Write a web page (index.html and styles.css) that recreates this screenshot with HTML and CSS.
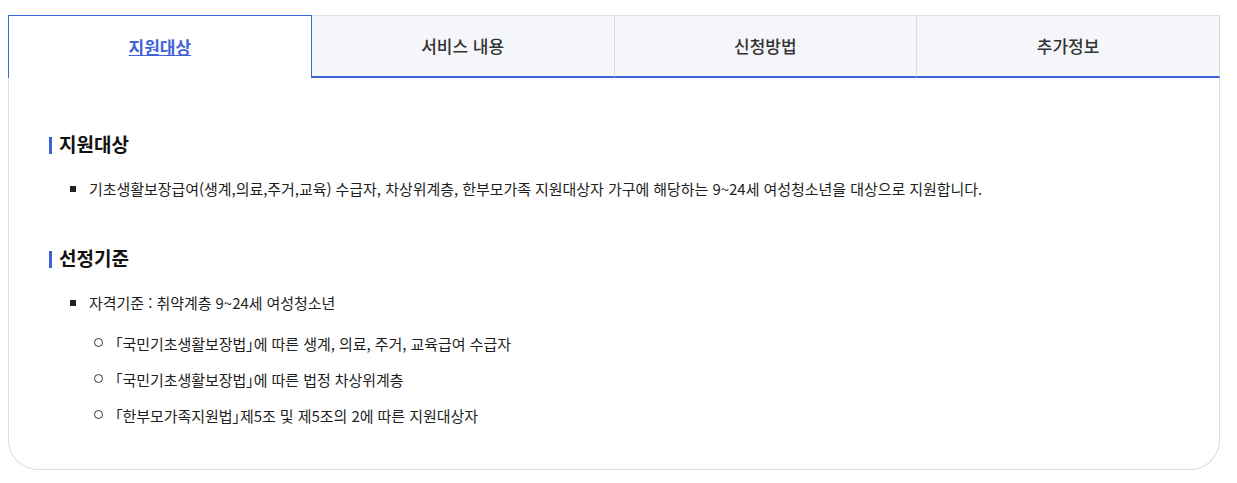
FILE: index.html
```html
<!DOCTYPE html>
<html lang="ko">

<head>
    <meta charset="UTF-8">
    <title>지원대상</title>
    <link rel="stylesheet" href="styles.css">
</head>

<body>

    <div class="tab-box">
        <ul class="tabs">
            <li class="on"><a href="javascript:void(0)">지원대상</a></li>
            <li><a href="javascript:void(0)">서비스 내용</a></li>
            <li><a href="javascript:void(0)">신청방법</a></li>
            <li><a href="javascript:void(0)">추가정보</a></li>
        </ul>

        <div class="tab-cont">
            <h4 class="tit">지원대상</h4>
            <ul class="dot-list">
                <li>기초생활보장급여(생계,의료,주거,교육) 수급자, 차상위계층, 한부모가족 지원대상자 가구에 해당하는 9~24세 여성청소년을 대상으로 지원합니다.</li>
            </ul>

            <h4 class="tit">선정기준</h4>
            <ul class="dot-list">
                <li>자격기준 : 취약계층 9~24세 여성청소년
                    <ul class="circle-list">
                        <li>「국민기초생활보장법」에 따른 생계, 의료, 주거, 교육급여 수급자</li>
                        <li>「국민기초생활보장법」에 따른 법정 차상위계층</li>
                        <li>「한부모가족지원법」제5조 및 제5조의 2에 따른 지원대상자</li>
                    </ul>
                </li>
            </ul>
        </div>
    </div>

</body>

</html>
```

FILE: styles.css
```css
* {
    margin: 0;
    padding: 0;
    box-sizing: border-box;
}

body {
    background: #fff;
    font-family: "Noto Sans CJK KR", "Noto Sans", sans-serif;
    color: #333;
}

ul {
    list-style: none;
}

.tab-box {
    width: 1212px;
    margin: 15px 0 0 8px;
}

/* 탭 메뉴 */
.tabs {
    display: flex;
    height: 63px;
}

.tabs>li {
    flex: 1;
    display: flex;
    align-items: center;
    justify-content: center;
    padding-bottom: 2px;
    background: #f5f6fa;
    border-top: 1px solid #dcdde1;
    border-right: 1px solid #dcdde1;
    border-bottom: 2px solid #3f62d8;
}

.tabs>li a {
    color: #333;
    font-size: 17px;
    font-weight: 500;
    text-decoration: none;
}

.tabs>li.on {
    background: #fff;
    border: 1px solid #3f62d8;
    border-bottom: none;
}

.tabs>li.on a {
    color: #3f62d8;
    font-weight: 700;
    text-decoration: underline;
}

/* 탭 내용 */
.tab-cont {
    border: 1px solid #dcdde1;
    border-top: none;
    border-radius: 0 0 30px 30px;
    padding: 53px 40px 41px;
}

.tit {
    font-size: 19px;
    line-height: 26px;
    font-weight: 700;
    color: #111;
}

.tit::before {
    content: "";
    display: inline-block;
    width: 3px;
    height: 17px;
    margin-right: 7px;
    background: #3f62d8;
    vertical-align: -2px;
}

.dot-list {
    margin: 20px 0 44px;
    padding-left: 21px;
}

.dot-list:last-child {
    margin-bottom: 0;
}

.dot-list>li {
    font-size: 15px;
    line-height: 24px;
    letter-spacing: -0.05px;
    color: #1e1e1e;
}

.dot-list>li::before {
    content: "";
    display: inline-block;
    width: 6px;
    height: 6px;
    margin-right: 13px;
    background: #222;
    vertical-align: 3px;
}

.circle-list {
    margin-top: 17px;
    padding-left: 24px;
    font-feature-settings: "palt";
}

.circle-list>li {
    margin-top: 12px;
}

.circle-list>li:first-child {
    margin-top: 0;
}

.circle-list>li::before {
    content: "";
    display: inline-block;
    width: 7px;
    height: 7px;
    margin-right: 12px;
    border: 1.5px solid #333;
    border-radius: 50%;
    vertical-align: 3px;
}
```
